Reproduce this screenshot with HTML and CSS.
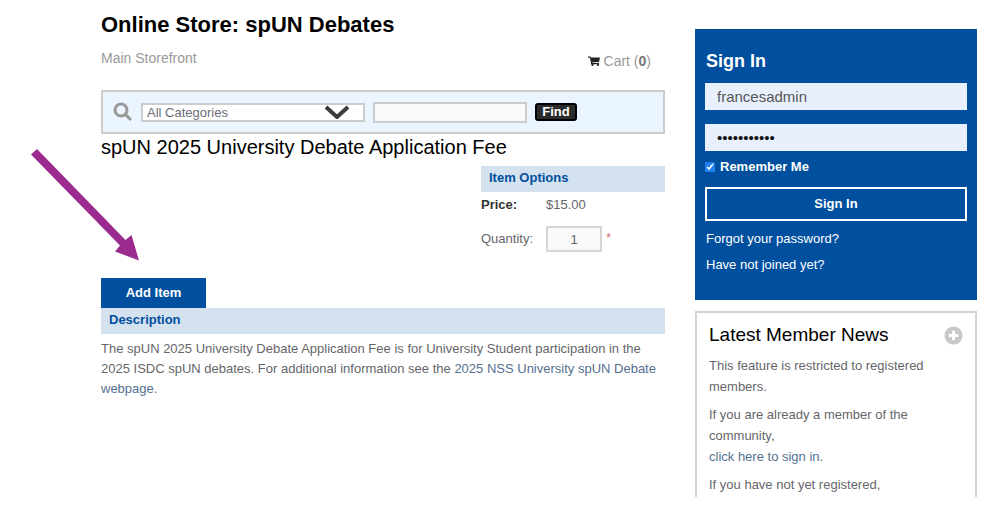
FILE: index.html
```html
<!DOCTYPE html>
<html lang="en">
<head>
<meta charset="utf-8">
<title>Online Store: spUN Debates</title>
<link rel="stylesheet" href="styles.css">
</head>
<body>
<div class="page">
  <main class="store">
    <h1 class="store-title">Online Store: spUN Debates</h1>
    <nav class="store-nav">
      <a href="#">Main Storefront</a>
      <a href="#" class="cart">
        <svg class="cart-icon" viewBox="0 0 12 10" aria-hidden="true"><path d="M0 .5h2.500l.4 1H12l-1 4.500L4.200 6.600V7H11v1.200H3.200L2 1.800H0z"/><circle cx="4.500" cy="8.900" r="1.100"/><circle cx="10" cy="8.900" r="1.100"/></svg>
        Cart (<b>0</b>)
      </a>
    </nav>
    <form class="search">
      <svg class="search-icon" viewBox="0 0 20 20" aria-hidden="true"><circle cx="8" cy="8" r="6"/><path d="M12.500 12.500L18 18"/></svg>
      <span class="select-wrap">
        <select class="category" aria-label="Category"><option>All Categories</option></select>
        <svg class="chevron" viewBox="0 0 26 14" aria-hidden="true"><path d="M2 2L13 12L24 2"/></svg>
      </span>
      <input class="query" type="text" aria-label="Search items">
      <button class="find" type="button">Find</button>
    </form>
    <h2 class="item-title">spUN 2025 University Debate Application Fee</h2>
    <form class="item">
      <section class="options">
        <h3 class="bar">Item Options</h3>
        <div class="option-row price-row"><b>Price:</b><span>$15.00</span></div>
        <div class="option-row"><label for="qty">Quantity:</label><span class="qty-field"><input class="qty" id="qty" type="text" value="1"><span class="required">*</span></span></div>
      </section>
      <button class="add-item" type="button">Add Item</button>
    </form>
    <section>
      <h3 class="bar">Description</h3>
      <p class="description">The spUN 2025 University Debate Application Fee is for University Student participation in the 2025 ISDC spUN debates. For additional information see the <a href="#">2025 NSS University spUN Debate webpage.</a></p>
    </section>
  </main>
  <aside class="sidebar">
    <form class="sign-in">
      <h2 class="sign-title">Sign In</h2>
      <input class="field" type="text" value="francesadmin" aria-label="Username">
      <input class="field password" type="password" value="abcdefghijk" aria-label="Password">
      <label class="remember"><input class="tick" type="checkbox" checked>Remember Me</label>
      <button class="sign-button" type="button">Sign In</button>
      <a class="help" href="#">Forgot your password?</a>
      <a class="help" href="#">Have not joined yet?</a>
    </form>
    <section class="news">
      <header class="news-head">
        <h2 class="news-title">Latest Member News</h2>
        <button class="more" type="button" aria-label="More news"><svg viewBox="0 0 20 20" aria-hidden="true"><circle cx="10" cy="10" r="9.500"/><path d="M10 5v10M5 10h10"/></svg></button>
      </header>
      <p>This feature is restricted to registered members.</p>
      <p>If you are already a member of the community,<br><a href="#">click here to sign in.</a></p>
      <p>If you have not yet registered,</p>
    </section>
  </aside>
  <svg class="pointer" viewBox="0 0 108 114" aria-hidden="true"><path d="M6 0L94.500 91L100.500 86L108 111.500L84 102.500L89 96.500L0 5.500Z"/></svg>
</div>
</body>
</html>
```
FILE: styles.css
```css
* { box-sizing: border-box; }
body {
  margin: 0;
  background: #fff;
  color: #66666a;
  font: 13px/20px "Liberation Sans", Arial, sans-serif;
}
h1, h2, h3, p { margin: 0; }
a { color: inherit; text-decoration: none; }
button, input, select { font: inherit; border-radius: 0; }
.page {
  position: relative;
  display: grid;
  grid-template-columns: 2fr 1fr;
  gap: 30px;
  align-items: start;
  padding: 12px 23px 0 101px;
}
.store-title { color: #000; font-size: 22px; line-height: 26px; }
.store-nav {
  display: flex;
  justify-content: space-between;
  padding: 10px 14px 0 0;
  color: #999;
  font-size: 14px;
}
.cart { padding-top: 3px; }
.cart-icon { width: 12px; height: 10px; fill: #222; }
.cart b { color: #777; }
.search {
  display: flex;
  align-items: center;
  gap: 8px;
  height: 44px;
  margin-top: 19px;
  padding: 0 86px 0 10px;
  background: #eaf5ff;
  border: 2px solid #ccc;
}
.search-icon { flex: none; width: 20px; height: 20px; fill: none; stroke: #999; stroke-width: 3px; }
.select-wrap { position: relative; flex: 3; }
.category {
  display: block;
  width: 100%;
  height: 19px;
  padding: 0 4px;
  appearance: none;
  border: 2px solid #ccc;
  background: #fff;
  color: #6c6c78;
  line-height: 15px;
}
.chevron {
  position: absolute;
  top: 2px;
  right: 15px;
  width: 26px;
  height: 14px;
  fill: none;
  stroke: #3c3c3c;
  stroke-width: 4px;
  pointer-events: none;
}
.query { flex: 2; min-width: 0; height: 21px; padding: 0; border: 2px solid #ccc; background: #f9f9f9; }
.find {
  flex: none;
  width: 42px;
  height: 18px;
  padding: 0;
  border: 2px solid #000;
  border-radius: 3px;
  background: #2b2b2b;
  color: #fff;
  font-weight: bold;
  line-height: 14px;
}
.item-title { color: #000; font-size: 20px; font-weight: normal; line-height: 26px; }
.item { padding-top: 6px; }
.options { width: 184px; margin-left: auto; }
.bar {
  height: 26px;
  padding: 0 8px;
  background: #d4e1ef;
  color: #00509f;
  font-size: 13px;
  line-height: 23px;
}
.option-row { display: grid; grid-template-columns: 65px 1fr; align-items: center; height: 26px; }
.price-row { margin-bottom: 8px; }
.option-row b { color: #333; }
.qty-field { display: flex; gap: 4px; color: #e07070; }
.required { line-height: 24px; }
.qty { width: 56px; height: 26px; border: 2px solid #d6d6d6; background: #f9f9f9; color: #66666a; text-align: center; }
.add-item {
  display: block;
  width: 105px;
  height: 30px;
  margin-top: 26px;
  border: 0;
  background: #00509f;
  color: #fff;
  font-weight: bold;
}
.description { padding: 5px 0; }
.description a, .news a { color: #55708f; }
.sidebar { display: grid; gap: 11px; padding-top: 17px; }
.sign-in {
  display: flex;
  flex-direction: column;
  padding: 19px 10px 25px;
  background: #00509f;
  color: #fff;
}
.sign-title { padding: 0 1px; font-size: 18px; line-height: 26px; }
.field {
  width: 100%;
  height: 27px;
  margin: 9px 0 14px;
  padding: 0 12px;
  border: 0;
  background: #e8f0fe;
  color: #555;
  font-size: 15px;
}
.password { margin: 0; color: #111; }
.remember { display: flex; align-items: center; gap: 5px; height: 20px; margin-top: 6px; font-weight: bold; }
.tick { width: 10px; height: 10px; margin: 0; accent-color: #2080f0; }
.sign-button {
  height: 34px;
  margin: 10px 0 8px;
  border: 2px solid #fff;
  background: #00509f;
  color: #fff;
  font-weight: bold;
}
.help { padding: 0 1px; line-height: 20px; }
.help + .help { margin-top: 6px; }
.news { padding: 9px 12px 2px; border: 2px solid #d4d4d4; border-bottom: 0; line-height: 21px; }
.news-head { display: flex; align-items: center; justify-content: space-between; margin-bottom: 7px; }
.news-title { color: #000; font-size: 19px; font-weight: normal; line-height: 26px; }
.more { width: 19px; height: 19px; padding: 0; border: 0; background: none; }
.more svg { display: block; width: 19px; height: 19px; fill: #c8c8c8; }
.more path { stroke: #fff; stroke-width: 3px; }
.news p + p { margin-top: 7px; }
.pointer { position: absolute; top: 149px; left: 31px; width: 108px; height: 114px; fill: #9c2b90; }
```
